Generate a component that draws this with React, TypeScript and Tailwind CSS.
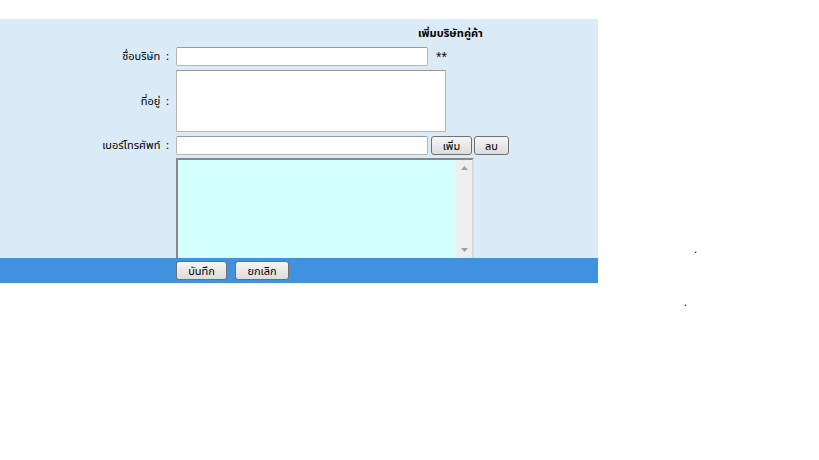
import React from 'react'

const font = { fontFamily: 'Tahoma, "Noto Sans", "Noto Sans Thai", "DejaVu Sans", sans-serif' }

function Btn({ children, className = '' }: { children: React.ReactNode; className?: string }) {
  return (
    <button
      className={`h-[19px] rounded-[3px] border border-[#707070] bg-gradient-to-b from-[#f6f6f6] to-[#dcdcdc] text-[11px] leading-none text-black ${className}`}
    >
      {children}
    </button>
  )
}

function Label({ children }: { children: React.ReactNode }) {
  return <div className="w-[176px] shrink-0 pr-[7px] text-right text-[11px] text-black">{children}</div>
}

export default function App() {
  return (
    <div className="relative h-[460px] w-[819px] bg-white" style={font}>
      <div className="h-[19px]" />
      <div className="w-[598px] bg-[#dbeaf7]">
        <div className="flex h-[28px] items-center pl-[418px] text-[11px] font-bold text-black">
          เพิ่มบริษัทคู่ค้า
        </div>
        <div className="flex items-center">
          <Label>ชื่อบริษัท&nbsp; :</Label>
          <div className="h-[19px] w-[252px] rounded-[2px] border border-[#b5b5b5] border-t-[#9a9a9a] bg-white" />
          <span className="ml-[8px] text-[10px] text-black">**</span>
        </div>
        <div className="mt-[4px] flex items-center">
          <Label>ที่อยู่&nbsp; :</Label>
          <div className="h-[62px] w-[270px] border border-[#b5b5b5] border-t-[#9a9a9a] bg-white" />
        </div>
        <div className="mt-[4px] flex items-center">
          <Label>เบอร์โทรศัพท์&nbsp; :</Label>
          <div className="h-[19px] w-[252px] rounded-[2px] border border-[#b5b5b5] border-t-[#9a9a9a] bg-white" />
          <Btn className="ml-[3px] w-[41px]">เพิ่ม</Btn>
          <Btn className="ml-[2px] w-[35px]">ลบ</Btn>
        </div>
        <div className="mt-[3px] flex">
          <div className="w-[176px] shrink-0" />
          <div className="flex h-[100px] w-[298px] border-2 border-[#888888] border-b-0 border-r-[#d8d8d8] bg-[#d4ffff]">
            <div className="flex-1" />
            <div className="flex w-[16px] flex-col items-center justify-between bg-[#eeeeee] py-[6px]">
              <svg width="7" height="4" viewBox="0 0 7 4">
                <path d="M0 4 L3.5 0 L7 4 Z" fill="#a0a0a0" />
              </svg>
              <svg width="7" height="4" viewBox="0 0 7 4">
                <path d="M0 0 L3.5 4 L7 0 Z" fill="#a0a0a0" />
              </svg>
            </div>
          </div>
        </div>
      </div>
      <div className="flex h-[25px] w-[598px] items-center bg-[#4091de] pl-[176px]">
        <Btn className="w-[51px]">บันทึก</Btn>
        <Btn className="ml-[8px] w-[54px]">ยกเลิก</Btn>
      </div>
      <span className="absolute left-[694px] top-[241px] text-[11px] text-black">.</span>
      <span className="absolute left-[684px] top-[294px] text-[11px] text-black">.</span>
    </div>
  )
}
